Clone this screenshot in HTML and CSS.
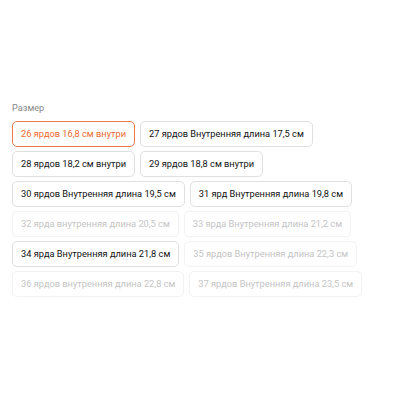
FILE: index.html
```html
<!DOCTYPE html>
<html>
<head>
<meta charset="utf-8">
<link rel="stylesheet" href="styles.css">
</head>
<body>
<div class="sku">
  <div class="label">Размер</div>
  <div class="options">
    <span class="opt selected">26 ярдов 16,8 см внутри</span>
    <span class="opt">27 ярдов Внутренняя длина 17,5 см</span>
    <span class="opt">28 ярдов 18,2 см внутри</span>
    <span class="opt">29 ярдов 18,8 см внутри</span>
    <span class="opt">30 ярдов Внутренняя длина 19,5 см</span>
    <span class="opt">31 ярд Внутренняя длина 19,8 см</span>
    <span class="opt disabled">32 ярда внутренняя длина 20,5 см</span>
    <span class="opt disabled">33 ярда Внутренняя длина 21,2 см</span>
    <span class="opt">34 ярда Внутренняя длина 21,8 см</span>
    <span class="opt disabled">35 ярдов Внутренняя длина 22,3 см</span>
    <span class="opt disabled">36 ярдов внутренняя длина 22,8 см</span>
    <span class="opt disabled">37 ярдов Внутренняя длина 23,5 см</span>
  </div>
</div>
</body>
</html>
```
FILE: styles.css
```css
html, body {
  margin: 0;
  padding: 0;
  background: #ffffff;
}
body {
  font-family: Roboto, "Liberation Sans", sans-serif;
}
.sku {
  padding: 99px 12px 0 12px;
  width: 376px;
}
.label {
  font-size: 9.2px;
  line-height: 17px;
  color: #888888;
  margin-bottom: 5px;
}
.options {
  display: flex;
  flex-wrap: wrap;
  column-gap: 5px;
  row-gap: 4px;
}
.opt {
  box-sizing: border-box;
  height: 26px;
  padding: 0 8px;
  border: 1px solid #e0e0e0;
  border-radius: 5px;
  font-size: 9.25px;
  line-height: 24px;
  color: #111111;
  white-space: nowrap;
}
.opt.selected {
  border-color: #ef7a4a;
  color: #ee6a30;
}
.opt.disabled {
  border-color: #f2f2f2;
  color: #c4c4c4;
}
```
